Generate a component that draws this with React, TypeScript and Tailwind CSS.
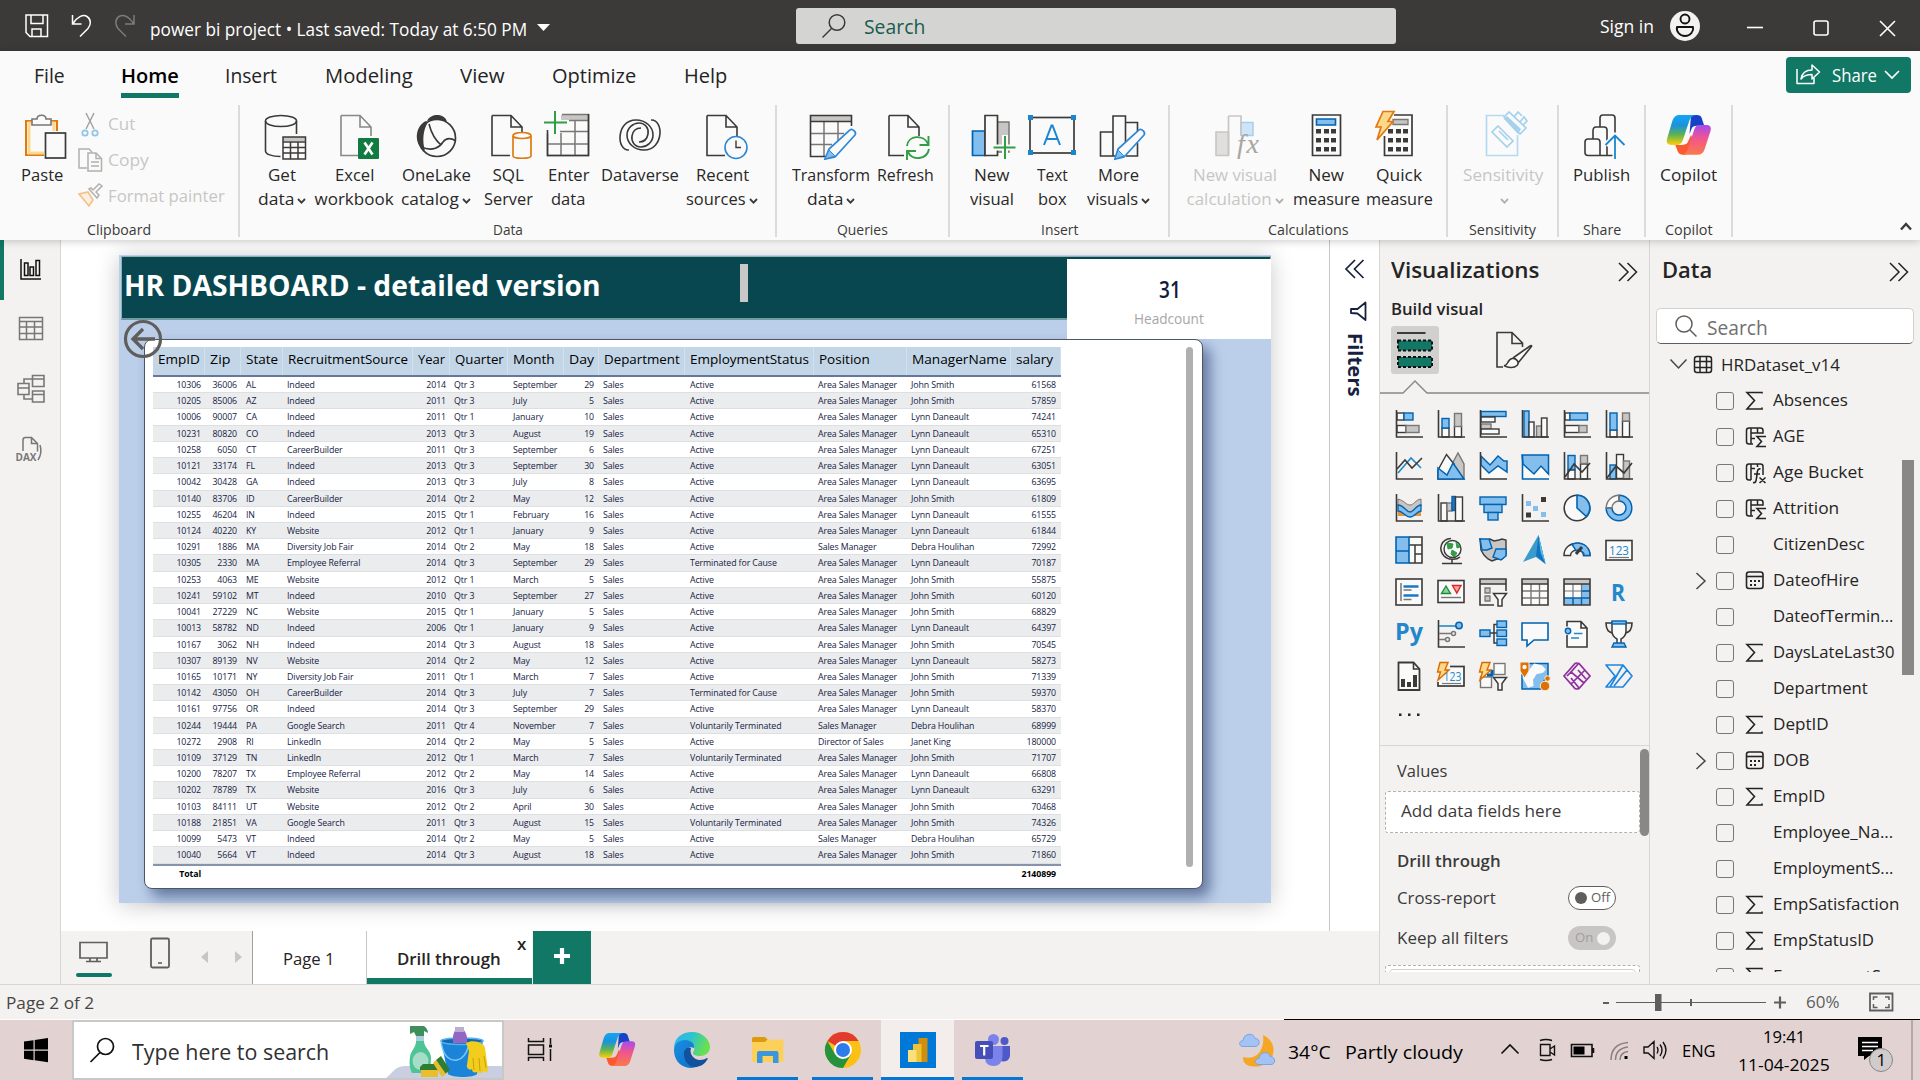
import { useLayoutEffect, useRef, useState } from "react";
import type { ReactNode } from "react";

/* ---------- helpers ---------- */

// Single-line text condensed or widened to an exact width.
function T({ w, children, className = "" }: { w: number; children: ReactNode; className?: string }) {
  const ref = useRef<HTMLSpanElement>(null);
  const [k, setK] = useState(1);
  useLayoutEffect(() => {
    if (ref.current && ref.current.offsetWidth > 0) setK(w / ref.current.offsetWidth);
  }, []);
  return (
    <span className={"block shrink-0 whitespace-nowrap " + className} style={{ width: w }}>
      <span ref={ref} className="inline-block origin-left" style={{ transform: `scaleX(${k})` }}>
        {children}
      </span>
    </span>
  );
}

type PProps = { x: number; y: number; w: number; h: number; children: ReactNode; className?: string };
function P({ x, y, w, h, children, className = "" }: PProps) {
  return (
    <svg width={w} height={h} viewBox={`${x} ${y} ${w} ${h}`} fill="none" className={"block shrink-0 " + className}>
      {children}
    </svg>
  );
}

const D = "#3b3a39";

function Caret({ color = D }: { color?: string }) {
  return (
    <svg width="9" height="6" viewBox="0 0 9 6" fill="none" className="mt-1 ml-[3px] shrink-0">
      <path d="M1 1l3.500 3.600L8 1" stroke={color} strokeWidth="1.800" />
    </svg>
  );
}

/* ---------- title bar ---------- */

function TitleBar() {
  return (
    <header className="flex h-[51px] shrink-0 items-center bg-[#3b3a38] text-white">
      <P x={24} y={14} w={26} h={26} className="ml-[24px]">
        <path d="M26 16h21.500v21.500H30L26 33.500zM31 16v8.500h12V16M32 37v-7h9v7" stroke="#fff" strokeWidth="1.500" />
      </P>
      <P x={70} y={14} w={24} h={26} className="ml-[20px]">
        <path d="M72.500 16v9h9M73 24.500C77 18 83 15 87 17.500c4 2.500 4.500 8 1 12L80 37.500" stroke="#fff" strokeWidth="1.500" />
      </P>
      <P x={112} y={14} w={26} h={26} className="ml-[18px]">
        <path d="M134 16v9h-9M133.500 24.500C129 18 124 15 119 17.500c-4 2.500-4 8-1 12l8 8" stroke="#7d7b79" strokeWidth="1.500" />
      </P>
      <T w={377} className="mt-[7px] ml-[12px] text-[17.5px]">
        power bi project • Last saved: Today at 6:50 PM
      </T>
      <P x={536} y={22} w={15} h={12} className="mt-[4px] ml-[9px]">
        <path d="M537 24h13l-6.500 7z" fill="#fff" />
      </P>
      <div className="ml-[245px] flex h-9 w-[600px] items-center rounded-[3px] bg-[#d4d4d2]">
        <P x={820} y={12} w={28} h={28} className="ml-[24px]">
          <circle cx="837" cy="22.500" r="7.800" stroke={D} strokeWidth="1.500" />
          <path d="M831.500 28.500L822.500 37.500" stroke={D} strokeWidth="1.500" />
        </P>
        <T w={61} className="mt-[2px] ml-[16px] text-[20px] text-[#185c4f]">Search</T>
      </div>
      <T w={54} className="mt-[2px] ml-[204px] text-[17.5px]">Sign in</T>
      <P x={1669} y={10} w={32} h={32} className="ml-[15px]">
        <circle cx="1685" cy="26" r="15" fill="#f3f2f1" />
        <circle cx="1685" cy="19" r="4.500" stroke="#111" strokeWidth="1.900" />
        <path d="M1677 27h16c1 4-2.500 9-8 9s-9-5-8-9z" stroke="#111" strokeWidth="1.900" strokeLinejoin="round" />
      </P>
      <P x={1746} y={18} w={152} h={20} className="mt-[5px] ml-[45px]">
        <path d="M1747 27.500h16" stroke="#fff" strokeWidth="1.600" />
        <rect x="1814" y="21" width="14" height="14" rx="2" stroke="#fff" strokeWidth="1.600" />
        <path d="M1880 21l15 15M1895 21l-15 15" stroke="#fff" strokeWidth="1.600" />
      </P>
    </header>
  );
}

/* ---------- ribbon ---------- */

function Menu() {
  const t = "text-[20px] text-[#242424]";
  return (
    <nav className="flex h-[54px] items-start">
      <T w={31} className={"mt-[10px] ml-[34px] " + t}>File</T>
      <div className="ml-[56px] flex h-[47px] w-[58px] flex-col justify-between border-b-[5px] border-[#117865] pt-[10px]">
        <T w={58} className={"font-semibold text-black " + t}>Home</T>
      </div>
      <T w={52} className={"mt-[10px] ml-[46px] " + t}>Insert</T>
      <T w={88} className={"mt-[10px] ml-[48px] " + t}>Modeling</T>
      <T w={45} className={"mt-[10px] ml-[47px] " + t}>View</T>
      <T w={84} className={"mt-[10px] ml-[47px] " + t}>Optimize</T>
      <T w={43} className={"mt-[10px] ml-[48px] " + t}>Help</T>
      <div className="mt-[6px] mr-[9px] ml-auto flex h-9 w-[125px] items-center rounded bg-[#117865] text-white">
        <P x={1794} y={62} w={28} h={26} className="ml-[8px]">
          <path d="M1797 69v14.500h17V78M1801 79c1-6 5-9 11-9v-5l7.500 7-7.500 7v-4.500c-4.500 0-8 .5-11 4.500z" stroke="#fff" strokeWidth="1.500" strokeLinejoin="round" />
        </P>
        <T w={45} className="ml-[10px] text-[17.5px]">Share</T>
        <P x={1883} y={70} w={18} h={12} className="ml-[6px]">
          <path d="M1885 72l7 7 7-7" stroke="#fff" strokeWidth="1.700" />
        </P>
      </div>
    </nav>
  );
}

type Line = [string, number, boolean?];
type BtnProps = { x: number; w: number; cls: string; lines: Line[]; dim?: boolean; children: ReactNode };
function Btn({ x, w, cls, lines, dim, children }: BtnProps) {
  return (
    <div className={"flex shrink-0 flex-col items-center text-[17px] leading-6 " + cls + (dim ? " text-[#c8c6c4]" : " text-[#292827]")}>
      <P x={x} y={108} w={w} h={55}>{children}</P>
      {lines.map(([t, tw, c], i) => (
        <div key={i} className="flex h-6 items-center">
          {t ? <T w={tw}>{t}</T> : null}
          {c ? <Caret color={dim ? "#b3b0ad" : D} /> : null}
        </div>
      ))}
    </div>
  );
}

function Group({ cls, label, lw, children }: { cls: string; label: string; lw: number; children: ReactNode }) {
  return (
    <section className={"flex h-[132px] shrink-0 flex-col border-r-2 border-[#dcdbda] " + cls}>
      <div className="flex flex-1 pt-[3px]">{children}</div>
      <div className="-mb-[2px] flex h-5 justify-center text-[15px] leading-5 text-[#3b3a39]">
        <T w={lw}>{label}</T>
      </div>
    </section>
  );
}

const doc = (x: number) => `M${x} 115.500h19l11 11.500v9M${x} 115.500v40h18M${x + 19} 115.500v11.500h11`;

function CopilotMark({ id }: { id: string }) {
  return (
    <>
      <defs>
        <linearGradient id={id + "a"} x1="0" y1="0" x2="0" y2="1">
          <stop offset="0" stopColor="#12a5f4" />
          <stop offset=".35" stopColor="#1b93dc" />
          <stop offset=".65" stopColor="#5bb254" />
          <stop offset="1" stopColor="#fccf08" />
        </linearGradient>
        <linearGradient id={id + "b"} x1="0" y1="0" x2="0" y2="1">
          <stop offset="0" stopColor="#a64af0" />
          <stop offset=".45" stopColor="#f0568d" />
          <stop offset="1" stopColor="#fb7a4b" />
        </linearGradient>
      </defs>
      <path d="M25 0h6q4 0 5 4l2.500 9h-7q-5 0-6 4l-2 6z" fill="#1741c6" />
      <path d="M20 48h-3q-4 0-5.500-4l-2.500-8h7q5 0 6-4l3-8 3 8z" fill="#fb5a2f" />
      <path d="M13 0h17q-5 1-6.500 6l-7 25q-1.500 5-6 5H5q-6 0-4.500-7L6 7q2-7 7-7z" fill={`url(#${id}a)`} />
      <path d="M32 48H15q5-1 6.500-6l7-25q1.500-5 6-5h6q6 0 4.500 7L39 41q-2 7-7 7z" fill={`url(#${id}b)`} />
    </>
  );
}

function Ribbon() {
  const W = "#fafafa";
  return (
    <div className="relative z-10 h-[189px] shrink-0 bg-[#fafafa] shadow-[0_1px_8px_rgba(0,0,0,0.22)]">
      <Menu />
      <div className="flex h-[135px]">
        <Group cls="w-[240px]" label="Clipboard" lw={64}>
          <Btn x={12} w={60} cls="ml-[12px] w-[60px]" lines={[["Paste", 42]]}>
            <path d="M33 121h-7v34h18M50 121h7v10" stroke="#e07a10" strokeWidth="2" />
            <path d="M33 123h-4v30h15M50 123h4v8" stroke="#fbd98c" strokeWidth="3" />
            <path d="M32 125v-6h5c0-5 9-5 9 0h5v6z" fill={W} stroke="#797775" strokeWidth="1.600" />
            <rect x="45.500" y="133" width="20" height="25" fill={W} stroke={D} strokeWidth="1.700" />
          </Btn>
          <div className="ml-[4px] flex flex-col text-[17px] leading-[36px] text-[#c8c6c4]">
            <div className="-mt-[2px] flex h-9 items-center">
              <P x={76} y={108} w={28} h={30}>
                <path d="M86 112l8 16M94 112l-8 16" stroke="#a19f9d" strokeWidth="1.400" />
                <circle cx="85" cy="132" r="2.700" stroke="#92c5e8" strokeWidth="1.800" />
                <circle cx="95" cy="132" r="2.700" stroke="#92c5e8" strokeWidth="1.800" />
              </P>
              <T w={27} className="ml-[4px]">Cut</T>
            </div>
            <div className="flex h-9 items-center">
              <P x={76} y={145} w={28} h={28}>
                <path d="M87 167h-8v-19h10l3 3M88 152h8l5.500 5.500V170H88zM96 152v5.500h5.500M91 161h8M91 165h8" stroke="#b3b0ad" strokeWidth="1.500" />
              </P>
              <T w={41} className="ml-[4px]">Copy</T>
            </div>
            <div className="flex h-9 items-center">
              <P x={76} y={181} w={28} h={28}>
                <path d="M79 193l9-2 5 8-4 6z" stroke="#f2c08a" strokeWidth="1.600" fill="#fbeedd" />
                <path d="M89 188l8 9 2-3-3-3 6-6-3-2-6 6-2-2z" stroke="#b3b0ad" strokeWidth="1.500" />
              </P>
              <T w={117} className="ml-[4px]">Format painter</T>
            </div>
          </div>
        </Group>

        <Group cls="w-[537px]" label="Data" lw={30}>
          <Btn x={252} w={60} cls="ml-[12px] w-[60px]" lines={[["Get", 28], ["data", 36, true]]}>
            <ellipse cx="281" cy="121" rx="15.500" ry="5.500" stroke={D} strokeWidth="1.600" />
            <path d="M265.500 121v30c0 3 6 5.500 15 5.500M296.500 121v13" stroke={D} strokeWidth="1.600" />
            <path d="M283 137h22v4h-22z" fill="#c8c6c4" />
            <path d="M283 137h22.500v22H283zM283 142h22M283 147.500h22M283 153h22M290.500 142v17M298 142v17" stroke={D} strokeWidth="1.500" />
          </Btn>
          <Btn x={313} w={82} cls="ml-[1px] w-[82px]" lines={[["Excel", 39], ["workbook", 79]]}>
            <path d={doc(341)} stroke="#8a8886" strokeWidth="1.600" />
            <rect x="358" y="138" width="21" height="21" rx="1" fill="#107c41" />
            <path d="M364.500 142.500l8 12M372.500 142.500l-8 12" stroke="#fff" strokeWidth="2.600" />
          </Btn>
          <Btn x={395} w={82} cls="w-[82px]" lines={[["OneLake", 69], ["catalog", 58, true]]}>
            <circle cx="437" cy="138" r="18.500" stroke={D} strokeWidth="1.700" />
            <path d="M427 121c4-8 18-8 20 1-7-3-14-2-20-1z" fill={D} />
            <path d="M426 121c-11 5-13 23-1 30-3-10-2-21 3-29z" fill={D} />
            <path d="M429 124c2 8 5 15 12 21M421 147c12 5 19 0 22-5 3-4 8-4 13-1" stroke={D} strokeWidth="1.600" />
          </Btn>
          <Btn x={478} w={60} cls="ml-[1px] w-[60px]" lines={[["SQL", 31], ["Server", 49]]}>
            <path d={doc(492)} stroke={D} strokeWidth="1.600" />
            <path d="M513 136v20c0 3 18 3 18 0v-20" fill={W} stroke="#e07a10" strokeWidth="1.700" />
            <ellipse cx="522" cy="135.500" rx="9" ry="3" fill={W} stroke="#e07a10" strokeWidth="1.700" />
          </Btn>
          <Btn x={538} w={60} cls="w-[60px]" lines={[["Enter", 41], ["data", 34]]}>
            <path d="M561 115h27v5h-27z" fill="#c8c6c4" />
            <path d="M562 114.500h26.500v41h-41v-22M569 120.500h19M560 131.500h28M547 144h41M561 133v22M575 121v34" stroke="#797775" strokeWidth="1.500" />
            <path d="M547.500 130v25.500h41V114" stroke={D} strokeWidth="1.600" />
            <path d="M555 111v23M544 122.500h23" stroke="#2f9e44" strokeWidth="2" />
          </Btn>
          <Btn x={599} w={82} cls="ml-[1px] w-[82px]" lines={[["Dataverse", 78]]}>
            <path d="M629 150c-13 1-13-30 7-30 10 0 17 7 17 15 0 7-6 12-12 12s-10-5-9-11 5-8 9-8" stroke={D} strokeWidth="1.600" />
            <path d="M651 120c13-1 13 30-7 30-10 0-17-7-17-15 0-7 6-12 12-12s10 5 9 11-5 8-9 8" stroke={D} strokeWidth="1.600" />
          </Btn>
          <Btn x={680} w={84} cls="-ml-[1px] w-[84px]" lines={[["Recent", 53], ["sources", 60, true]]}>
            <path d={doc(707)} stroke={D} strokeWidth="1.600" />
            <circle cx="736" cy="147.500" r="11" fill={W} stroke="#2b88d8" strokeWidth="1.600" />
            <path d="M736 140.500v7h5" stroke={D} strokeWidth="1.400" />
          </Btn>
        </Group>

        <Group cls="w-[173px]" label="Queries" lw={51}>
          <Btn x={791} w={80} cls="ml-[14px] w-[80px]" lines={[["Transform", 78], ["data", 36, true]]}>
            <path d="M810 116h41v5h-41z" fill="#c8c6c4" />
            <path d="M824 121v35M838 121v22M810 133.500h34M810 144.500h22" stroke="#797775" strokeWidth="1.500" />
            <path d="M851.500 126v-10.500h-41v41h17M810 121.500h41" stroke={D} strokeWidth="1.600" />
            <path d="M850 130c2-2 7 2 5 5l-20 22-10 2 4-10z" fill={W} stroke="#2b88d8" strokeWidth="1.700" />
            <path d="M829 150l6 6-10 3z" fill="#83beec" stroke="#2b88d8" />
          </Btn>
          <Btn x={873} w={64} cls="ml-[2px] w-[64px]" lines={[["Refresh", 57]]}>
            <path d={doc(889)} stroke={D} strokeWidth="1.600" />
            <path d="M904 137h30v24h-30z" fill={W} />
            <path d="M907 146c1-11 17-12 21-2M928.500 136v9h-9M929 149c-2 11-17 12-21 3M907 160v-9h9" stroke="#2f9e44" strokeWidth="1.900" />
          </Btn>
        </Group>

        <Group cls="w-[220px]" label="Insert" lw={37}>
          <Btn x={962} w={60} cls="ml-[12px] w-[60px]" lines={[["New", 36], ["visual", 44]]}>
            <path d="M997 122h12v30h-12z" fill="#c8c6c4" stroke="#797775" strokeWidth="1.500" />
            <path d="M972.500 131H985v24.500h-12.500z" fill="#83beec" stroke="#0063b1" strokeWidth="1.700" />
            <path d="M985 115.500h12.500v40H985z" fill={W} stroke={D} strokeWidth="1.700" />
            <path d="M1005 135v24M992 147.500h24" stroke={W} strokeWidth="6" />
            <path d="M1005 136v23M993.500 147.500h22" stroke="#2f9e44" strokeWidth="2" />
          </Btn>
          <Btn x={1022} w={60} cls="w-[60px]" lines={[["Text", 31], ["box", 29]]}>
            <rect x="1030" y="117.500" width="44" height="35.500" stroke={D} strokeWidth="1.700" />
            <path d="M1028 115h5v5h-5zM1071 115h5v5h-5zM1028 150h5v5h-5zM1071 150h5v5h-5z" fill="#1a86d0" />
            <path d="M1044 145l7.500-19.500h1L1060 145M1046.500 139h11" stroke="#1a86d0" strokeWidth="2" />
          </Btn>
          <Btn x={1082} w={72} cls="w-[72px]" lines={[["More", 41], ["visuals", 51, true]]}>
            <path d="M1125 122.500h12.500v9M1137.500 143v13H1126M1100.500 132H1113v24h-12.500zM1113 156v-40h12.500v28M1113 156h6" stroke={D} strokeWidth="1.600" />
            <path d="M1139 130c2-2 7 2 5 5l-20 22-9 2 3-10z" fill={W} stroke="#2b88d8" strokeWidth="1.700" />
            <path d="M1118 150l6 6-9 3z" fill="#83beec" stroke="#2b88d8" />
          </Btn>
        </Group>

        <Group cls="w-[278px]" label="Calculations" lw={81}>
          <Btn x={1184} w={102} cls="ml-[14px] w-[102px]" dim lines={[["New visual", 84], ["calculation", 85, true]]}>
            <path d="M1216 132h12.500v23.500H1216z" fill="#e1dfdd" stroke="#c8c6c4" strokeWidth="1.600" />
            <path d="M1241 122.500h12v13h-12z" fill="#cfe4f7" stroke="#a9cdec" strokeWidth="1.500" />
            <path d="M1228.500 116H1241v20M1228.500 116v39.500" stroke="#c8c6c4" strokeWidth="1.700" />
            <text x="1237" y="153" fontFamily="Liberation Serif" fontStyle="italic" fontSize="28" fill="#a8a5a2" textLength="22">fx</text>
          </Btn>
          <Btn x={1291} w={71} cls="ml-[5px] w-[71px]" lines={[["New", 36], ["measure", 67]]}>
            <path d="M1312.500 115h28v40.500h-28z" fill={W} stroke={D} strokeWidth="1.700" />
            <path d="M1316.500 119h19v6h-19z" fill="#83beec" stroke="#0063b1" strokeWidth="1.600" />
            {[1316, 1324, 1331].map((a) => [129, 138, 147].map((b) => <rect key={a + "-" + b} x={a} y={b} width="5" height="4.500" fill={D} />))}
          </Btn>
          <Btn x={1363} w={72} cls="ml-[1px] w-[72px]" lines={[["Quick", 46], ["measure", 67]]}>
            <path d="M1394 115h18v40.500h-27.500V136" stroke={D} strokeWidth="1.700" />
            <path d="M1393 119.500h15v5h-15z" fill="#c8c6c4" stroke="#797775" strokeWidth="1.300" />
            {[1388, 1396, 1403].map((a) => [129, 138, 147].map((b) => <rect key={a + "-" + b} x={a} y={b} width="5" height="4.500" fill={D} />))}
            <path d="M1383 111.500h11l-6 10h5l-16 18.500 4-13h-5z" fill="#fcd88a" stroke="#e07a10" strokeWidth="1.700" />
          </Btn>
        </Group>

        <Group cls="w-[111px]" label="Sensitivity" lw={67}>
          <Btn x={1462} w={82} cls="ml-[14px] w-[82px]" dim lines={[["Sensitivity", 80], ["", 0, true]]}>
            <path d="M1504 115.500h-17.500v40h31V135" stroke="#b5d9f0" strokeWidth="1.700" />
            <path d="M1498 126l15 15-6 6-15-15zM1499 131l9 9M1504 117l5-5 17 16-6 6zM1514 117l4-5 4 4M1520 122l4-5 3 4-4 4" stroke="#a6d1ec" strokeWidth="1.700" />
            <path d="M1504 119l3-3 14 13-3 5z" fill="#a6d1ec" />
          </Btn>
        </Group>
        <Group cls="w-[87px]" label="Share" lw={38}>
          <Btn x={1571} w={60} cls="ml-[12px] w-[60px]" lines={[["Publish", 57]]}>
            <path d="M1613 155.500h-25q-3 0-3-3v-10.500q0-3 3-3h9q3 0 3 3v13M1593 139v-8q0-4 3-4h8q3 0 3 3v25M1600 127v-9q0-3 3-3h9q3 0 3 3v17" stroke={D} strokeWidth="1.600" />
            <path d="M1615 159v-23M1605.500 145l9.500-9.500 9.500 9.500" stroke={W} strokeWidth="5" />
            <path d="M1615 159v-23M1605.500 145l9.500-9.500 9.500 9.500" stroke="#1a86d0" strokeWidth="1.800" />
          </Btn>
        </Group>
        <Group cls="w-[87px]" label="Copilot" lw={48}>
          <Btn x={1658} w={61} cls="ml-[12px] w-[61px]" lines={[["Copilot", 57]]}>
            <g transform="translate(1666.500 115) scale(.98 .83)"><CopilotMark id="r" /></g>
          </Btn>
        </Group>
        <P x={1899} y={220} w={14} h={12} className="mt-[115px] mr-[7px] ml-auto">
          <path d="M1901 229.500l5-5.500 5 5.500" stroke={D} strokeWidth="2.400" />
        </P>
      </div>
    </div>
  );
}

/* ---------- left navigation ---------- */

function LeftNav() {
  return (
    <aside className="flex w-[61px] shrink-0 border-r border-[#d8d6d4] bg-[#f3f2f1]">
      <div className="h-[60px] w-1 bg-[#117865]" />
      <P x={4} y={240} w={56} h={240}>
        <path d="M21 259v20h20M24.500 263h3.500v12.500h-3.500zM30 267h3.500v8.500H30zM36 260.500h3.500v15H36z" stroke="#111" strokeWidth="1.500" />
        <path d="M19.500 317.500h23v22h-23zM19.500 321.500h23M19.500 327h23M19.500 333.500h23M26.500 321v18M34.500 321v18" stroke="#797775" strokeWidth="1.500" />
        <path d="M32.500 375.500H44v11H32.500zM32.500 379h11.500M18 383.500h11v11H18zM18 388h11M32.500 391H44v11H32.500zM32.500 394.500H44M24 383v-4h8M24 395v4h8" stroke="#797775" strokeWidth="1.600" />
        <path d="M23 451v-11q0-2.500 2.500-2.500h6l6 6v8M31.500 437.500v6h6M40 445q2.500 8-2 15" stroke="#797775" strokeWidth="1.500" />
        <text x="15.500" y="461" fontFamily="Open Sans" fontSize="10.500" fontWeight="bold" fill="#797775" textLength="21" lengthAdjust="spacingAndGlyphs">DAX</text>
      </P>
    </aside>
  );
}

/* ---------- report canvas ---------- */

const COLS: [string, number][] = [
  ["EmpID", 42], ["Zip", 20], ["State", 32], ["RecruitmentSource", 120], ["Year", 27], ["Quarter", 49], ["Month", 42],
  ["Day", 25], ["Department", 76], ["EmploymentStatus", 119], ["Position", 51], ["ManagerName", 95], ["salary", 37],
];

const ROWS = `10306|36006|AL|Indeed|2014|3|September|29|A|A|J|61568
10205|85006|AZ|Indeed|2011|3|July|5|A|A|J|57859
10006|90007|CA|Indeed|2011|1|January|10|A|A|L|74241
10231|80820|CO|Indeed|2013|3|August|19|A|A|L|65310
10258|6050|CT|CareerBuilder|2011|3|September|6|A|A|L|67251
10121|33174|FL|Indeed|2013|3|September|30|A|A|L|63051
10042|30428|GA|Indeed|2013|3|July|8|A|A|L|63695
10140|83706|ID|CareerBuilder|2014|2|May|12|A|A|J|61809
10255|46204|IN|Indeed|2015|1|February|16|A|A|L|61555
10124|40220|KY|Website|2012|1|January|9|A|A|L|61844
10291|1886|MA|Diversity Job Fair|2014|2|May|18|A|S|D|72992
10305|2330|MA|Employee Referral|2014|3|September|29|T|A|L|70187
10253|4063|ME|Website|2012|1|March|5|A|A|J|55875
10241|59102|MT|Indeed|2010|3|September|27|A|A|J|60120
10041|27229|NC|Website|2015|1|January|5|A|A|J|68829
10013|58782|ND|Indeed|2006|1|January|9|A|A|L|64397
10167|3062|NH|Indeed|2014|3|August|18|A|A|J|70545
10307|89139|NV|Website|2014|2|May|12|A|A|L|58273
10165|10171|NY|Diversity Job Fair|2011|1|March|7|A|A|J|71339
10142|43050|OH|CareerBuilder|2014|3|July|7|T|A|J|59370
10161|97756|OR|Indeed|2014|3|September|29|A|A|L|58370
10244|19444|PA|Google Search|2011|4|November|7|V|S|D|68999
10272|2908|RI|LinkedIn|2014|2|May|5|A|R|K|180000
10109|37129|TN|LinkedIn|2012|1|March|7|V|A|J|71707
10200|78207|TX|Employee Referral|2012|2|May|14|A|A|L|66808
10202|78789|TX|Website|2016|3|July|6|A|A|L|63291
10103|84111|UT|Website|2012|2|April|30|A|A|J|70468
10188|21851|VA|Google Search|2011|3|August|15|V|A|J|74326
10099|5473|VT|Indeed|2014|2|May|5|A|S|D|65729
10040|5664|VT|Indeed|2014|3|August|18|A|A|J|71860`.split("\n").map((r) => r.split("|"));

const STATUS: Record<string, string> = { A: "Active", T: "Terminated for Cause", V: "Voluntarily Terminated" };
const POSITION: Record<string, string> = { A: "Area Sales Manager", S: "Sales Manager", R: "Director of Sales" };
const MANAGER: Record<string, string> = { J: "John Smith", L: "Lynn Daneault", D: "Debra Houlihan", K: "Janet King" };
const GRID = "grid grid-cols-[52px_36px_42px_130px_37px_58px_56px_35px_86px_129px_93px_104px_50px]";

function Table() {
  return (
    <div className="w-[908px] text-[#15213f]">
      <div className={GRID + " h-[30px] border-b-2 border-[#66779a] bg-[#c3d6e7] text-[13.5px] leading-[24px] text-black"}>
        {COLS.map(([n, w]) => (
          <div key={n} className="border-r border-[#d3e1ed] pl-[5px]"><T w={w}>{n}</T></div>
        ))}
      </div>
      <div className="text-[8.800px] leading-[16.600px] tracking-[-0.012em]">
        {ROWS.map((r, i) => (
          <div key={r[0]} className={GRID + " h-[16.220px] border-b border-[#dedfe3] whitespace-nowrap " + (i % 2 ? "bg-[#ebecee]" : "bg-white")}>
            <div className="pr-[4px] text-right">{r[0]}</div>
            <div className="pr-[4px] text-right">{r[1]}</div>
            <div className="pl-[5px]">{r[2]}</div>
            <div className="pl-[4px]">{r[3]}</div>
            <div className="pr-[4px] text-right">{r[4]}</div>
            <div className="pl-[4px]">Qtr {r[5]}</div>
            <div className="pl-[5px]">{r[6]}</div>
            <div className="pr-[5px] text-right">{r[7]}</div>
            <div className="pl-[4px]">Sales</div>
            <div className="pl-[5px]">{STATUS[r[8]]}</div>
            <div className="pl-[4px]">{POSITION[r[9]]}</div>
            <div className="pl-[4px]">{MANAGER[r[10]]}</div>
            <div className="pr-[5px] text-right">{r[11]}</div>
          </div>
        ))}
        <div className={GRID + " h-[20px] border-t-2 border-[#8792ad] font-bold text-black"}>
          <div className="pr-[4px] text-right">Total</div>
          <div className="col-span-11" />
          <div className="pr-[5px] text-right">2140899</div>
        </div>
      </div>
    </div>
  );
}

function ReportPage() {
  return (
    <div className="relative mt-[15px] ml-[58px] h-[648px] w-[1152px] shrink-0 bg-[#bccfea] pt-px pl-[2px] shadow-[0_2px_22px_rgba(0,0,0,0.22)]">
      <div className="flex h-[64px] items-center border border-b-2 border-[#8fb0b5] border-b-[#6f9ba0] bg-[#08474f]">
        <T w={477} className="-mt-[5px] ml-[2px] text-[28px] leading-[40px] font-bold text-white">HR DASHBOARD - detailed version</T>
        <div className="mt-[-10px] ml-[139px] h-[38px] w-2 bg-[#c8c8c8]" />
      </div>
      <div className="mt-[19px] ml-[23px] flex h-[550px] w-[1059px] overflow-hidden rounded-lg border border-[#4c5666] bg-white pt-[7px] pl-[8px] shadow-[7px_8px_14px_0px_rgba(40,60,110,0.6)]">
        <Table />
        <div className="ml-[125px] h-[520px] w-[7px] rounded bg-[#b0b0b0]" />
      </div>
      <div className="absolute top-[4px] right-0 flex h-[80px] w-[204px] flex-col items-center bg-white pt-[16px]">
        <T w={22} className="ml-[2px] text-[22.5px] leading-[30px] font-semibold text-[#111c3a]">31</T>
        <T w={70} className="mt-[4px] text-[14px] leading-5 text-[#a6a6a6]">Headcount</T>
      </div>
      <P x={122} y={318} w={42} h={42} className="absolute top-[63px] left-[3px]">
        <circle cx="143" cy="339" r="17.500" stroke="#605e5c" strokeWidth="3.200" />
        <path d="M155 339h-21M143 329l-10 10 10 10" stroke="#605e5c" strokeWidth="3.400" />
      </P>
    </div>
  );
}

function PageTabs() {
  return (
    <div className="mt-auto flex h-[53px] shrink-0 bg-[#f3f2f1] text-[17px] text-[#252423]">
      <P x={61} y={931} w={191} h={53}>
        <path d="M80 942.500h27v15.500H80zM90 958v3.500M97 958v3.500M86 961.500h15" stroke="#605e5c" strokeWidth="1.700" />
        <rect x="76" y="973" width="36" height="4" rx="2" fill="#117865" />
        <rect x="151" y="938.500" width="18" height="29" rx="1.500" stroke="#605e5c" strokeWidth="1.800" />
        <path d="M158 963h4" stroke="#605e5c" strokeWidth="1.600" />
        <path d="M208 951v12l-7-6zM235 951v12l7-6z" fill="#c8c6c4" />
      </P>
      <div className="flex w-[115px] items-center border-x border-[#a19f9d] border-r-[#c8c6c4] bg-white pt-[3px] pl-[30px]">
        <T w={52}>Page 1</T>
      </div>
      <div className="flex w-[165px] border-b-[6px] border-[#117865] bg-white pl-[30px]">
        <T w={104} className="mt-[15px] font-semibold">Drill through</T>
        <T w={9} className="mt-[-3px] ml-[16px] text-[17px] leading-8 font-semibold">x</T>
      </div>
      <div className="ml-px flex w-[58px] justify-center bg-[#117865]">
        <P x={552} y={946} w={20} h={20} className="mt-[15px]">
          <path d="M562 948v16M554 956h16" stroke="#fff" strokeWidth="4.200" />
        </P>
      </div>
    </div>
  );
}

function FiltersPane() {
  return (
    <div className="flex h-[691px] w-[50px] shrink-0 flex-col items-center border-l border-[#c8c6c4] bg-white">
      <P x={1343} y={258} w={24} h={24} className="mt-[18px]">
        <path d="M1355 260l-9 9 9 9M1363.500 260l-9 9 9 9" stroke="#15213f" strokeWidth="1.700" />
      </P>
      <P x={1345} y={300} w={24} h={22} className="mt-[18px] ml-1">
        <path d="M1365.500 302.500v17.500l-8-6.500-6.500-.5v-4h6.500z" stroke="#15213f" strokeWidth="1.800" strokeLinejoin="round" />
      </P>
      <div className="mt-[11px] h-[66px] w-7">
        <div className="ml-[28px] w-[64px] origin-top-left rotate-90 text-[20px] leading-7 font-bold text-[#15213f]">
          <T w={64}>Filters</T>
        </div>
      </div>
    </div>
  );
}

/* ---------- visualizations pane ---------- */

const B = "#83beec";
const S = "#0063b1";
const G = "#c8c6c4";
const H = "#797775";
const L = "#fafafa";
const axes = <path d="M1.500 0v27H28" stroke={D} strokeWidth="1.600" />;
const r = (x: number, y: number, w: number, h: number, f: string, s: string) => (
  <rect key={`${x}-${y}`} x={x} y={y} width={w} height={h} fill={f} stroke={s} strokeWidth="1.400" />
);
const bolt = <path d="M3 .5h8L8 8h4L1 18l2.500-8H.5z" fill="#fcd88a" stroke="#d96a00" strokeWidth="1.400" />;
const funnel = <path d="M14.500 15.500h13l-4.500 6v6.500h-4V21.500z" fill={L} stroke={D} strokeWidth="1.500" />;
const txt = (x: number, y: number, size: number, s: string, len: number, weight = "normal", fill = "#2288c9") => (
  <text x={x} y={y} fontSize={size} fontWeight={weight} fill={fill} fontFamily="Open Sans" textLength={len} lengthAdjust="spacingAndGlyphs">{s}</text>
);

const VISUALS: ReactNode[] = [
  <>{r(2, 3, 7, 7, L, D)}{r(9, 3, 9, 7, B, S)}{r(2, 15.5, 9, 7, L, D)}{r(11, 15.5, 13, 7, G, H)}{axes}</>,
  <>{r(5, 18, 7, 9, L, D)}{r(5, 8.5, 7, 9.5, B, S)}{r(17.5, 16, 7, 11, L, D)}{r(17.5, 3.5, 7, 13, G, H)}{axes}</>,
  <>{r(2, 1.5, 25, 5, B, S)}{r(2, 7, 14, 5, L, D)}{r(2, 14, 10, 5, G, H)}{r(2, 19, 18, 5, L, D)}{axes}</>,
  <>{r(3, 1, 5, 26, B, S)}{r(8, 12, 5, 15, L, D)}{r(15.5, 16, 5, 11, G, H)}{r(20.5, 8, 5.5, 19, L, D)}{axes}</>,
  <>{r(2, 3, 5, 7, L, D)}{r(7, 3, 17.5, 7, B, S)}{r(2, 15.5, 14, 7, L, D)}{r(16, 15.5, 8, 7, G, H)}{axes}</>,
  <>{r(5, 20, 7, 7, L, D)}{r(5, 3, 7, 17, B, S)}{r(17.5, 11, 7, 16, L, D)}{r(17.5, 3, 7, 8, G, H)}{axes}</>,
  <><path d="M3 21l13-15 10 10" stroke="#2288c9" strokeWidth="1.600" /><path d="M2 17l8-9 7 8L27 6" stroke={D} strokeWidth="1.600" />{axes}</>,
  <><path d="M15 12l6-11 6 11v15H15z" fill={G} stroke={H} strokeWidth="1.400" /><path d="M1 18L9.500 2.500 17 12v15H1z" fill={L} stroke={D} strokeWidth="1.500" /><path d="M1 16l9 7 6-12 11 16H1z" fill={B} stroke={S} strokeWidth="1.500" /></>,
  <><path d="M2 4l9 10L19 5l6 6h3v15H2z" fill={L} /><path d="M2 4l9 9 8-9 6 5h3v11l-9-6-9 7-8-8z" fill={B} stroke={S} strokeWidth="1.500" />{axes}</>,
  <><path d="M2 3h26v23H2z" fill={L} /><path d="M1 3h26.500v19L20 14l-7 8L2 12z" fill={B} stroke={S} strokeWidth="1.500" /><path d="M1.500 3v24H28" stroke={S} strokeWidth="1.600" /></>,
  <>{r(5, 18, 7, 9, L, D)}{r(5, 3.5, 7, 14, B, S)}{r(17.5, 12, 7, 15, L, D)}{r(17.5, 3.5, 7, 8, G, H)}<path d="M2 25l9-13 8 8 8-9" stroke={D} strokeWidth="1.700" />{axes}</>,
  <>{r(5, 13, 6, 14, B, S)}{r(11.5, 2.5, 7, 24, L, D)}{r(18.5, 9, 6, 18, G, H)}<path d="M2 26l9-12 8 7 8-10" stroke={D} strokeWidth="1.700" />{axes}</>,
  <><path d="M3 15h7l5 5 5-5h6v7H3z" fill="#e8933a" /><path d="M3 5c7 2 8 6 12 6s5-5 11-6v7c-6 1-7 6-11 6S8 14 3 12z" fill={G} stroke={H} /><path d="M3 11c6 0 8 7 12 7s6-7 11-7v6c-4 0-6 6-11 6s-7-6-12-6z" fill={B} stroke={S} strokeWidth="1.300" />{axes}</>,
  <>{r(4, 9, 6, 18, L, D)}{r(10, 9, 5, 8, G, H)}{r(15, 2.5, 3.5, 14, "#1a78c8", S)}{r(18.5, 3, 7, 24, L, D)}{axes}</>,
  <>{r(1, 3, 26, 7.5, B, S)}{r(5, 10.5, 18, 8, B, S)}{r(9, 18.5, 10, 7.5, B, S)}</>,
  <><path d="M5 7h5v5H5zM12 12h5v5h-5zM20 18h5v5h-5z" fill={B} /><path d="M20 3h5v5h-5zM5 18.500h5v5H5z" fill={D} />{axes}</>,
  <><circle cx="14" cy="14" r="12.800" fill={L} stroke={D} strokeWidth="1.600" /><path d="M14 1.200a12.800 12.800 0 0 1 9.500 21.300L14 14z" fill={B} stroke={S} strokeWidth="1.600" /></>,
  <><circle cx="14" cy="14" r="9.700" stroke={L} strokeWidth="6" /><path d="M14 1.200A12.800 12.800 0 1 1 1.200 14H7a7 7 0 1 0 7-7z" fill={B} stroke={S} strokeWidth="1.500" /><path d="M1.200 14A12.800 12.800 0 0 1 14 1.200V7a7 7 0 0 0-7 7z" stroke={H} strokeWidth="1.400" /></>,
  <><path d="M1 1h13v26H1z" fill={B} /><path d="M14 1h13v26H14z" fill={L} /><path d="M14 9h13M20 9v18M20 18h7" stroke={D} strokeWidth="1.500" /><path d="M14 1h13v26H14" stroke={D} strokeWidth="1.600" /><path d="M14 1H1v26h13zM1 15h13" stroke={S} strokeWidth="1.600" /></>,
  <><circle cx="15.500" cy="13" r="8.500" fill={L} stroke={D} strokeWidth="1.400" /><path d="M10 7l6 1-1 4-4 1zM19 6l4 5-3 1zM15 14l5 3-3 4-3-3z" fill="#2f9e44" stroke="#2f9e44" /><path d="M14 2.500C4 3 1 13 7 20c4 4 12 4.500 16 1M15 24v3M5 27.500h20" stroke={D} strokeWidth="1.500" /></>,
  <><path d="M1 3l6 2 4-2 4 2 5-1 3-1 4 1v15l-4 4h-5l-5 2-4-2-4-4-3-5z" fill={G} stroke={D} strokeWidth="1.400" /><path d="M1 3h9l3 9-5 2H3z" fill={B} stroke={S} strokeWidth="1.400" /><path d="M17 13h10v7l-5 4-8-3z" fill={B} stroke={S} strokeWidth="1.400" /></>,
  <><path d="M17.500-1L2 26l13-5 9.500 7z" fill="#3a9ccb" /><path d="M17.500-1l7 29-9.500-8z" fill="#1273c4" /><path d="M17.500-1L24.500 28l-5-12z" fill="#5cc0dd" /></>,
  <><path d="M1 19.500C1 3 27 3 27 19.500h-6.500c0-7-13-7-13 0z" fill={L} stroke={D} strokeWidth="1.500" /><path d="M9 8.500c8-4 18 1 18 11h-6c0-4-4-6-8-5z" fill={B} stroke={S} strokeWidth="1.400" /><path d="M19 11l-6 7" stroke={D} strokeWidth="3" /></>,
  <><rect x="1" y="4.500" width="26" height="19.500" fill={L} stroke={D} strokeWidth="1.600" />{txt(4, 18.5, 13, "123", 20)}<path d="M4 21.500h20" stroke={H} strokeWidth="1.200" /></>,
  <><rect x="1" y="1" width="26" height="26" fill={L} stroke={D} strokeWidth="1.600" /><path d="M6 5v18M8.500 12h8M8.500 21.500h8" stroke={H} strokeWidth="1.500" /><path d="M8.500 8.500h15M8.500 17.500h15" stroke="#1a78c8" strokeWidth="2.500" /></>,
  <><rect x="1" y="2.500" width="26" height="22" fill={L} stroke={D} strokeWidth="1.600" /><path d="M9 8l4.500 7.500h-9z" fill="#8fd19b" stroke="#1e8c3a" strokeWidth="1.400" /><path d="M15.500 7.500h8.500l-4.200 7.500z" fill="#f7a3a3" stroke="#d92626" strokeWidth="1.400" /><path d="M4 19.500h20" stroke={H} strokeWidth="1.400" /></>,
  <><path d="M1 1h26v5H1z" fill={G} /><path d="M15 27H1V1h26v12M1 6h26" stroke={D} strokeWidth="1.600" /><path d="M6 10h5v5H6zM6 18h5v5H6z" fill={G} stroke={H} strokeWidth="1.300" />{funnel}</>,
  <><path d="M1 1h26v26H1z" fill={L} /><path d="M1 1h26v5H1z" fill={G} /><path d="M1 13h26M1 20h26M10 6v21M18.500 6v21" stroke={H} strokeWidth="1.400" /><path d="M1 1h26v26H1zM1 6h26" stroke={D} strokeWidth="1.600" /></>,
  <><path d="M1 1h26v26H1z" fill={L} /><path d="M1 1h26v5H1z" fill={G} /><path d="M18 6h9v21H1v-7h17z" fill={B} /><path d="M1 13h26M10 6v21M18.500 6v21" stroke={H} strokeWidth="1.200" /><path d="M1 20h26M18.500 20v7M10 20v7M18.500 13H27" stroke={S} strokeWidth="1.300" /><path d="M1 1h26v26H1zM1 6h26" stroke={D} strokeWidth="1.600" /></>,
  <>{txt(6, 23, 24, "R", 14, "bold")}</>,
  <>{txt(0, 20, 23.5, "Py", 28, "bold")}</>,
  <>{axes}<path d="M2 6h17" stroke="#2288c9" strokeWidth="1.600" /><path d="M2 13.500h12M2 19.500h7" stroke={H} strokeWidth="1.500" /><circle cx="22" cy="5.500" r="3.200" fill={B} stroke={S} strokeWidth="1.500" /><circle cx="16.500" cy="13.500" r="2" stroke={H} strokeWidth="1.500" /><circle cx="10.500" cy="19.500" r="2" stroke={H} strokeWidth="1.500" /></>,
  <><path d="M11 13h7M18 4.500h-3V23h3" stroke={D} strokeWidth="1.500" />{r(1, 10, 10, 6.5, B, S)}{r(18, 1, 9.5, 6.5, B, S)}{r(18, 10, 9.5, 6.5, B, S)}{r(18, 19, 9.5, 6.5, B, S)}</>,
  <><path d="M1 3h26v17H13l-7 6v-6H1z" fill={L} stroke={S} strokeWidth="1.600" /></>,
  <><path d="M4 1.500h14l6 6.500v19H4z" fill={L} /><path d="M4 6.500v-5h14l6 6.500v19H4V15M18 1.500V8h6" stroke={D} strokeWidth="1.600" /><circle cx="5" cy="11" r="2.700" fill={B} stroke={S} strokeWidth="1.400" /><path d="M11 13.500h8.500M8 18h8" stroke="#2288c9" strokeWidth="1.300" /></>,
  <><path d="M7.500 3H1c0 7 3 9.500 7 10M20.500 3H27c0 7-3 9.500-7 10" stroke={D} strokeWidth="1.600" /><path d="M7 2h14v9c0 4-3 7-5 8v5h-4v-5c-2-1-5-4-5-8z" fill={L} stroke={D} strokeWidth="1.500" />{r(7, 1, 14, 3, B, S)}<path d="M9 23h10l2 4H7z" fill={B} stroke={S} strokeWidth="1.400" /></>,
  <><path d="M3.500.5h15l6 6.500v21h-21z" fill={L} stroke={D} strokeWidth="1.800" /><path d="M18.500.5V7h6" stroke={D} strokeWidth="1.600" /><path d="M6 17h4v8H6zM12 20h4v5h-4zM18 13h4v12h-4z" fill={D} /></>,
  <><rect x="1" y="4.500" width="26" height="19.500" fill={L} stroke={D} strokeWidth="1.700" /><path d="M-1-1h14v10l-8 11h-6z" fill="#f3f2f1" />{txt(6.5, 19, 13, "123", 18)}<path d="M5 21.500h19" stroke={H} strokeWidth="1.200" />{bolt}</>,
  <>{r(15, 1.5, 11, 11, L, H)}{r(1.5, 15, 11, 10.5, L, H)}<path d="M8 13h5V8" stroke={S} strokeWidth="3" />{bolt}{funnel}</>,
  <><path d="M1 1.500h26V14l-4 5-3 8H1z" fill={B} stroke={S} strokeWidth="1.500" /><path d="M10 2h8l5 3-2 4-6 3-2 6 2 6-5 3-8-9 4-6z" fill={L} transform="rotate(14 14 14)" /><path d="M-1 0h9v9l-4.500 7L-1 9z" fill="#e07000" stroke="#f3f2f1" /><circle cx="3.500" cy="5" r="2.200" fill={L} /><circle cx="24" cy="24" r="4.800" fill="#e07000" stroke="#f3f2f1" /><circle cx="26.500" cy="16.500" r="2.800" fill="#e07000" stroke="#f3f2f1" /></>,
  <><path d="M12 1.500L1 14l11 12.500q2 1 4 0L27 14 16 1.500q-2-1-4 0zM15.500 1.500L8 10l13 11M22 8L8 22M4 14l4-4M8 16l8 10M15 8l8 9" stroke="#8f2f9e" strokeWidth="1.700" /></>,
  <><path d="M1 3h17l9 11-9 11H1l9-11zM18 3L5 25M22 8L9 24" stroke="#1f86e0" strokeWidth="1.700" strokeLinejoin="round" /></>,
];

function Toggle({ on }: { on?: boolean }) {
  return on ? (
    <div className="flex h-6 w-12 items-center rounded-full bg-[#c8c6c4] pl-[7px] text-[12.5px] text-[#a19f9d]">
      <T w={18}>On</T>
      <div className="ml-[4px] h-[13px] w-[13px] rounded-full bg-[#f3f2f1]" />
    </div>
  ) : (
    <div className="flex h-6 w-12 items-center rounded-full border border-[#605e5c] bg-white pl-[6px] text-[12.5px] text-[#605e5c]">
      <div className="h-3 w-3 rounded-full bg-[#605e5c]" />
      <T w={19} className="mt-px ml-[4px]">Off</T>
    </div>
  );
}

function VisPane() {
  return (
    <section className="flex h-[744px] w-[270px] shrink-0 flex-col border-l border-[#d8d6d4] bg-[#f3f2f1] text-[#252423]">
      <div className="mt-[14px] flex h-9 items-center pl-[11px]">
        <T w={148} className="-mt-[4px] text-[21.5px] font-semibold">Visualizations</T>
        <P x={1617} y={258} w={22} h={22} className="ml-[78px]">
          <path d="M1619 260l9 9-9 9M1627.500 260l9 9-9 9" stroke="#252423" strokeWidth="1.500" />
        </P>
      </div>
      <T w={92} className="mt-[6px] ml-[11px] text-[16.5px] leading-[26px] font-semibold">Build visual</T>
      <P x={1380} y={322} w={269} h={74}>
        <rect x="1391" y="326" width="48" height="48" rx="3" fill="#d2d0ce" />
        <path d="M1397 333h28.500" stroke={D} strokeWidth="2" />
        <rect x="1398" y="340.500" width="34" height="10" fill="#117865" stroke="#111" strokeWidth="2" strokeDasharray="3 2" />
        <rect x="1398" y="357" width="34" height="10" fill="#117865" stroke="#111" strokeWidth="2" strokeDasharray="3 2" />
        <path d="M1503 367h-6v-34.500h15l10.500 10.500v4M1512 332.500v11h11" stroke={D} strokeWidth="1.600" />
        <path d="M1504 365.500c4 1 3-6 8-7 4-1 8 4 5 7-3 3-9 2.500-13 0zM1513 358l17-12c2-1 2 0 1 1l-13 16" fill={L} stroke={D} strokeWidth="1.600" />
        <path d="M1380 393h23l12-12 12 12h222" stroke="#8a8886" strokeWidth="1.400" />
      </P>
      <div className="mt-[14px] ml-[15px] grid w-[252px] grid-cols-6">
        {VISUALS.map((v, i) => (
          <svg key={i} width="28" height="28" viewBox="0 0 28 28" fill="none" className="mb-[14px] block overflow-visible">{v}</svg>
        ))}
      </div>
      <P x={1395} y={704} w={30} h={20} className="ml-[15px]">
        <path d="M1399 713.500h2.500v2.500h-2.500zM1408 713.500h2.500v2.500h-2.500zM1417 713.500h2.500v2.500h-2.500z" fill="#252423" />
      </P>
      <div className="mt-[21px] flex h-[227px] overflow-hidden border-t border-[#d8d6d4] text-[16.5px] text-[#3b3a39]">
        <div className="w-[260px] shrink-0">
          <T w={50} className="mt-[13px] ml-[17px] leading-6">Values</T>
          <div className="mt-[8px] ml-[5px] flex h-[42px] items-center rounded-[3px] border border-dashed border-[#b3b0ad] bg-white pl-[15px]">
            <T w={160} className="-mt-[2px]">Add data fields here</T>
          </div>
          <T w={104} className="mt-[16px] ml-[17px] leading-6 font-semibold">Drill through</T>
          <div className="mt-[13px] ml-[17px] flex h-6 items-center">
            <T w={99}>Cross-report</T>
            <div className="ml-[72px]"><Toggle /></div>
          </div>
          <div className="mt-[16px] ml-[17px] flex h-6 items-center">
            <T w={111}>Keep all filters</T>
            <div className="ml-[60px]"><Toggle on /></div>
          </div>
          <div className="mt-[15px] ml-[5px] h-10 rounded-[3px] border border-dashed border-[#b3b0ad] bg-white p-[3px]">
            <div className="h-9 rounded border border-[#d2d0ce]" />
          </div>
        </div>
        <div className="mt-[3px] h-[87px] w-[9px] rounded-full bg-[#8a8886]" />
      </div>
    </section>
  );
}

/* ---------- data pane ---------- */

const FIELDS: [string, number, string, boolean?][] = [
  ["Absences", 75, "sum"], ["AGE", 32, "calc"], ["Age Bucket", 90, "fx"], ["Attrition", 66, "calc"], ["CitizenDesc", 92, ""],
  ["DateofHire", 86, "date", true], ["DateofTermin...", 120, ""], ["DaysLateLast30", 122, "sum"], ["Department", 95, ""],
  ["DeptID", 56, "sum"], ["DOB", 36, "date", true], ["EmpID", 52, "sum"], ["Employee_Na...", 120, ""], ["EmploymentS...", 121, ""],
  ["EmpSatisfaction", 126, "sum"], ["EmpStatusID", 101, "sum"], ["EngagementS...", 121, "sum"],
];

function FieldIcon({ kind }: { kind: string }) {
  const s = "#252423";
  return (
    <svg width="22" height="22" viewBox="0 0 22 22" fill="none" className="block shrink-0">
      {kind === "sum" && <path d="M17 3.500V2.500H2l7.500 8L2 19h15v-1.500" stroke={s} strokeWidth="1.600" />}
      {kind === "date" && (
        <>
          <rect x="1.500" y="2" width="16.500" height="16.500" rx="2.500" stroke={s} strokeWidth="1.600" />
          <path d="M2 6.500h16" stroke={s} strokeWidth="1.600" />
          <path d="M5 10h2v2H5zM9 10h2v2H9zM13 10h2v2h-2zM5 14h2v2H5zM9 14h2v2H9z" fill={s} />
        </>
      )}
      {kind === "calc" && (
        <>
          <path d="M8 18H4q-2.500 0-2.500-2.500v-11Q1.500 2 4 2h11.500Q18 2 18 4.500V7H6M6 2v16M12.500 2v5M6 12.500h4" stroke={s} strokeWidth="1.500" />
          <path d="M21 10.500h-9l4.500 5-4.500 5h9" stroke={s} strokeWidth="1.600" />
        </>
      )}
      {kind === "fx" && (
        <>
          <path d="M6 18H4q-2.500 0-2.500-2.500v-11Q1.500 2 4 2h11.500Q18 2 18 4.500V13M6 2v16M6 6.500h4M12.500 2v3" stroke={s} strokeWidth="1.500" />
          <path d="M15.500 7c-4-1-3 4-4 9-.5 4-1 5-3.500 4.500M9 12h6M14.500 15.500l6 5.500M20.500 15.500l-6 5.500" stroke={s} strokeWidth="1.600" />
        </>
      )}
    </svg>
  );
}

function DataPane() {
  return (
    <section className="flex h-[744px] w-[271px] shrink-0 flex-col border-l border-[#d8d6d4] bg-[#f3f2f1] text-[#252423]">
      <div className="mt-[14px] flex h-9 items-center pl-[12px]">
        <T w={50} className="-mt-[4px] text-[21.5px] font-semibold">Data</T>
        <P x={1888} y={258} w={22} h={22} className="ml-[176px]">
          <path d="M1890 260l9 9-9 9M1898.500 260l9 9-9 9" stroke="#252423" strokeWidth="1.500" />
        </P>
      </div>
      <div className="mt-[18px] ml-[6px] flex h-9 w-[258px] items-center rounded-[5px] border border-[#d2d0ce] border-b-[#605e5c] bg-white">
        <P x={1673} y={313} w={26} h={26} className="ml-[16px]">
          <circle cx="1684" cy="324" r="8" stroke="#605e5c" strokeWidth="1.500" />
          <path d="M1690 330l6.500 6.500" stroke="#605e5c" strokeWidth="1.500" />
        </P>
        <T w={61} className="mt-[3px] ml-[8px] text-[19.5px] text-[#707070]">Search</T>
      </div>
      <div className="flex h-[628px] overflow-hidden text-[16.5px]">
        <div className="w-[252px] shrink-0">
          <div className="mt-[3px] flex h-9 items-center">
            <P x={1669} y={354} w={46} h={22} className="ml-[19px]">
              <path d="M1670.500 359.500l8 8.500 8-8.500" stroke="#484644" strokeWidth="1.500" />
              <path d="M1697 356.500h12q2.500 0 2.500 2.500v11q0 2.500-2.500 2.500h-12q-2.500 0-2.500-2.500v-11q0-2.500 2.500-2.500zM1700 356v17M1706.500 356v17M1694 361.500h18M1694 367.500h18" stroke="#252423" strokeWidth="1.500" />
            </P>
            <T w={119} className="ml-[6px]">HRDataset_v14</T>
          </div>
          {FIELDS.map(([name, w, kind, exp]) => (
            <div key={name} className="flex h-9 items-center pl-[45px]">
              <svg width="14" height="20" viewBox="0 0 14 20" fill="none" className="shrink-0">
                {exp ? <path d="M1.500 2l8.500 8-8.500 8" stroke="#484644" strokeWidth="1.500" /> : null}
              </svg>
              <div className="ml-[7px] h-[18px] w-[18px] shrink-0 rounded-[3px] border border-[#797775]" />
              <div className="ml-[11px]"><FieldIcon kind={kind} /></div>
              <T w={w} className="-mt-px ml-[6px]">{name}</T>
            </div>
          ))}
        </div>
        <div className="mt-[116px] h-[215px] w-[12px] bg-[#8a8886]" />
      </div>
    </section>
  );
}

/* ---------- status bar and taskbar ---------- */

function StatusBar() {
  return (
    <footer className="flex h-[36px] shrink-0 flex-col bg-[#f3f2f1]">
      <div className="flex h-[35px] items-center border-t border-[#d8d6d4] text-[17px] text-[#484644]">
        <T w={88} className="mt-[2px] ml-[6px]">Page 2 of 2</T>
        <P x={1600} y={988} w={190} h={28} className="ml-[1506px]">
          <path d="M1603 1003h6M1774 1002.500h12M1780 996.500v12" stroke="#605e5c" strokeWidth="2.200" />
          <path d="M1616 1002.500h150" stroke="#605e5c" strokeWidth="1.200" />
          <path d="M1655 994h6.500v17h-6.500zM1690 999h2v7h-2z" fill="#605e5c" />
        </P>
        <T w={34} className="ml-[16px] text-[16.5px] text-[#605e5c]">60%</T>
        <P x={1868} y={992} w={26} h={22} className="ml-[28px]">
          <path d="M1870 994.500h22.500v17H1870z" stroke="#605e5c" strokeWidth="1.800" />
          <path d="M1873.500 1001v-3h4M1889 1001v-3h-4M1873.500 1005v3.500h4M1889 1005v3.500h-4" stroke="#605e5c" strokeWidth="1.500" />
        </P>
      </div>
      <div className="flex h-px"><div className="w-[1284px] bg-white" /><div className="flex-1 bg-black" /></div>
    </footer>
  );
}

function Cleaning() {
  return (
    <P x={384} y={1022} w={118} h={56} className="ml-auto">
      <path d="M384 1080c10-8 10-14 22-14h98v14z" fill="#c9cfe0" />
      <path d="M410 1026h14q4 3 4 7l-4-2v5h-8l-2-4-4 2z" fill="#3f8f5c" />
      <path d="M416 1036h8v6h-8z" fill="#a8cfe0" />
      <path d="M416 1041h8c0 7 7 9 7 17 0 8-2 13-3 15h-16c-2-4-3-9-2-16 1-7 6-9 6-16z" fill="#4dc495" />
      <ellipse cx="420.500" cy="1061" rx="8" ry="9" fill="#a7dcc9" />
      <path d="M441 1041c0-4 42-4 42 0l-6 33c-3 4-25 4-29 0z" fill="#1b84d8" />
      <path d="M441 1041c0-4 42-4 42 0s-42 5-42 0z" fill="#1367ad" stroke="#55b1f0" strokeWidth="1.500" />
      <path d="M453 1043v-5c0-5 2-6 3-11h7c1 5 4 6 4 11v5z" fill="#9166c4" />
      <path d="M455 1027h9v5h-9z" fill="#b9aed0" />
      <path d="M441 1041c2 17 10 20 16 19 6-1 10-8 12-15" stroke="#7cc6f5" strokeWidth="1.500" />
      <path d="M466 1043c8-4 18 0 19 5l3 22c-1 4-4 2-4 0-1 4-6 4-7 2-3 1-5 0-5-3-2 2-6-1-5-4l2-14z" fill="#f2cd1b" />
      <path d="M473 1058l1 12M479 1058l1 13M484 1056l2 12" stroke="#caa208" />
      <path d="M421 1067h17v10h-17z" fill="#e9bd2b" />
      <path d="M420 1067l3-3h14l3 3v3h-20z" fill="#2f7d32" />
      <path d="M436 1060l9 14 5-4-9-14z" fill="#2f7d32" />
      <path d="M433 1063l9 14 4-3-10-14z" fill="#e9bd2b" />
    </P>
  );
}

function Taskbar() {
  return (
    <div className="flex h-[60px] shrink-0 items-center bg-[#e2d3d2] text-black">
      <P x={23} y={1037} w={26} h={26} className="ml-[23px]">
        <path d="M24 1041.500l9.500-1.300v9.300H24zM34.700 1040l13.300-2v11.500H34.700zM24 1050.700h9.500v9.500L24 1058.800zM34.700 1050.700H48v11.500l-13.300-1.900z" fill="#000" />
      </P>
      <div className="ml-[23px] flex h-full w-[432px] items-center border-2 border-[#c8c8c8] bg-white">
        <P x={88} y={1036} w={28} h={28} className="ml-[14px]">
          <circle cx="105.500" cy="1046.500" r="8" stroke="#111" strokeWidth="1.700" />
          <path d="M100 1052.500l-9.500 9.500" stroke="#111" strokeWidth="1.700" />
        </P>
        <T w={197} className="mt-[5px] ml-[16px] text-[21px] text-[#303030]">Type here to search</T>
        <Cleaning />
      </div>
      <P x={526} y={1036} w={30} h={28} className="ml-[22px]">
        <path d="M528.500 1038v3.500h15V1038M528.500 1061v-3.500h15v3.500M528.500 1045h15v9.500h-15zM550.500 1038v6M550.500 1049v12" stroke="#111" strokeWidth="1.500" />
        <path d="M549 1044.500h3v3h-3z" fill="#111" />
      </P>
      <P x={597} y={1030} w={40} h={40} className="ml-[41px]">
        <g transform="translate(599 1033) scale(.8 .69)"><CopilotMark id="t" /></g>
      </P>
      <P x={672} y={1030} w={40} h={40} className="ml-[35px]">
        <defs>
          <linearGradient id="e1" x1="0" y1="0" x2="1" y2=".3"><stop offset="0" stopColor="#2fb4f0" /><stop offset=".5" stopColor="#2cc3d0" /><stop offset="1" stopColor="#69e04e" /></linearGradient>
          <linearGradient id="e2" x1="0" y1="0" x2="1" y2="1"><stop offset="0" stopColor="#1b8ee0" /><stop offset="1" stopColor="#0b6fc8" /></linearGradient>
        </defs>
        <path d="M674 1048c0-10 8-16 18-16 11 0 18 8 18 15 0 6-5 9-10 9-4 0-7-1-7-3s2-2 1-6c-2-6-15-8-20 1z" fill="url(#e1)" />
        <path d="M674 1050c0-6 5-10 11-10 6 0 10 4 9 8-6-3-9 3-6 9 2 5 6 8 12 8-4 2.500-9 3.500-13 2.500-8-2-13-8.500-13-17.500z" fill="url(#e2)" />
        <path d="M684 1052c1-4 4-5 7-4-2 6 3 12 9 12 3 0 5-1 7-2 1 0 1 1 0 2-3 5-8 7-12 7-7 0-12-8-11-15z" fill="#12519c" />
      </P>
      <div className="ml-[25px] flex h-full w-[61px] flex-col items-center border-b-[3px] border-[#0078d7] pt-[15px]">
        <P x={749} y={1035} w={36} h={32}>
          <path d="M751 1038.500q0-1.500 1.500-1.500H764l3 3v5h-16z" fill="#dd9b0c" />
          <path d="M751 1042h13l2.500-2.500H781q1.500 0 1.500 1.500v19.500q0 1.500-1.500 1.500h-28.500q-1.500 0-1.500-1.500z" fill="#fdcf5b" />
          <path d="M756 1063v-10q0-2 2-2h17.500q2 0 2 2v10h-5.500v-7h-10.500v7z" fill="#3b97dc" />
        </P>
      </div>
      <div className="ml-[14px] flex h-full w-[61px] flex-col items-center border-b-[3px] border-[#0078d7] pt-[10px]">
        <P x={822} y={1030} w={40} h={40}>
          <circle cx="842" cy="1050" r="18" fill="#fbc116" />
          <path d="M842 1050L826.400 1041A18 18 0 0 1 857.600 1041z" fill="#e33b2e" />
          <path d="M826.400 1041A18 18 0 0 0 842 1068l7.800-13.500H834.200z" fill="#24923f" />
          <path d="M842 1050h15.600a18 18 0 0 0 0-9H842z" fill="#fbc116" />
          <circle cx="842" cy="1050" r="9" fill="#fff" />
          <circle cx="842" cy="1050" r="7" fill="#2f7bea" />
        </P>
      </div>
      <div className="ml-[8px] flex h-full w-[73px] flex-col items-center border-b-[3px] border-[#0078d7] bg-[#f3edec] pt-[12px]">
        <P x={899} y={1032} w={36} h={36}>
          <path d="M899 1032h36v36h-36z" fill="#0078d7" />
          <path d="M917.500 1038h9v24h-9z" fill="#cf8f0c" />
          <path d="M912 1044h8.500v18H912z" fill="#efc338" />
          <path d="M907 1050h8.500v12H907z" fill="#f9e07a" />
        </P>
      </div>
      <div className="ml-[8px] flex h-full w-[61px] flex-col items-center border-b-[3px] border-[#0078d7] pt-[12px]">
        <P x={973} y={1032} w={38} h={36}>
          <circle cx="1003.500" cy="1041" r="4" fill="#5059c9" />
          <circle cx="992.500" cy="1039.500" r="5.500" fill="#7b83eb" />
          <path d="M996 1046h13v10q-1 5-6 5.500-5 0-7-4z" fill="#5059c9" />
          <path d="M984 1046h17.500v11q-1 9-9 9t-8.500-8z" fill="#7b83eb" />
          <rect x="974" y="1041" width="18" height="18" rx="2" fill="#464eb8" />
          <path d="M979 1046h8.500M983.200 1046v9.500" stroke="#fff" strokeWidth="2.200" />
        </P>
      </div>
      <P x={1238} y={1030} w={40} h={38} className="ml-[215px]">
        <path d="M1263 1034c9 4 13 13 9 22-4 8-15 12-25 8-3-2-4-4-4-8 14 4 22-8 20-22z" fill="#f5a623" />
        <path d="M1243 1045.500c-5 0-4-6 0-6 1-8 11-8 12-2 6 0 5 8 0 8z" fill="#a4c3f5" stroke="#7ba3e6" />
        <path d="M1259 1063.500c-5 0-5-6 0-6 1-8 11-7 11-2 6 0 6 8 1 8z" fill="#a4c3f5" stroke="#7ba3e6" />
      </P>
      <T w={43} className="mt-[3px] ml-[10px] text-[18.5px]">34°C</T>
      <T w={118} className="mt-[3px] ml-[14px] text-[18.5px]">Partly cloudy</T>
      <P x={1498} y={1036} w={172} h={28} className="ml-[35px]">
        <g stroke="#111" strokeWidth="1.600">
          <path d="M1501.500 1053.500l8.500-8.500 8.500 8.500" />
          <path d="M1540.500 1044.500h9.500v11h-9.500zM1550 1049l4.500-3v9l-4.500-3M1540 1040.500q6-2 12 0M1540 1059.500q6 2 12 0" strokeWidth="1.400" />
          <path d="M1571.500 1044.500h20.500v12h-20.500zM1593.500 1048v5" />
          <path d="M1644 1047h4l6-5.500v17l-6-5.500h-4zM1657 1047q2 3 0 6.500M1660 1044.500q4 5.500 0 11.500M1663 1042q6 8 0 16.500" strokeWidth="1.400" />
        </g>
        <path d="M1573.500 1046.500h11v8h-11z" fill="#000" />
        <path d="M1611 1060q0-16 17-17.500M1615.500 1060q0-11.500 12.500-13M1620 1060q0-7.500 8-8.500" stroke="#8a8080" strokeWidth="1.500" />
        <path d="M1624.500 1056h3v3h-3z" fill="#000" />
      </P>
      <T w={34} className="mt-px ml-[12px] text-[17px]">ENG</T>
      <div className="mt-px ml-[22px] flex w-[92px] flex-col items-center text-[17px] leading-[28px]">
        <T w={42}>19:41</T>
        <T w={92}>11-04-2025</T>
      </div>
      <P x={1856} y={1030} w={40} h={46} className="mt-[4px] ml-[26px]">
        <path d="M1858 1038h24v19h-13l-5 4v-4h-6z" fill="#000" />
        <path d="M1862 1043.500h16M1862 1047.500h16M1862 1051.500h11" stroke="#fff" strokeWidth="1.400" />
        <circle cx="1881" cy="1061" r="11.500" fill="#d0cccc" stroke="#8a8686" />
        <text x="1876.500" y="1067" fontFamily="Open Sans" fontSize="17" fill="#000">1</text>
      </P>
      <div className="ml-[15px] h-full w-0.5 bg-[#b3a7a7]" />
    </div>
  );
}

export default function App() {
  return (
    <div className="flex h-[1080px] w-[1920px] flex-col overflow-hidden bg-white font-['Open_Sans',sans-serif]">
      <TitleBar />
      <Ribbon />
      <main className="flex h-[744px] shrink-0">
        <LeftNav />
        <div className="flex w-[1318px] shrink-0 flex-col">
          <div className="flex h-[691px] overflow-hidden bg-white">
            <div className="flex w-[1268px] shrink-0">
              <ReportPage />
            </div>
            <FiltersPane />
          </div>
          <PageTabs />
        </div>
        <VisPane />
        <DataPane />
      </main>
      <StatusBar />
      <Taskbar />
    </div>
  );
}
